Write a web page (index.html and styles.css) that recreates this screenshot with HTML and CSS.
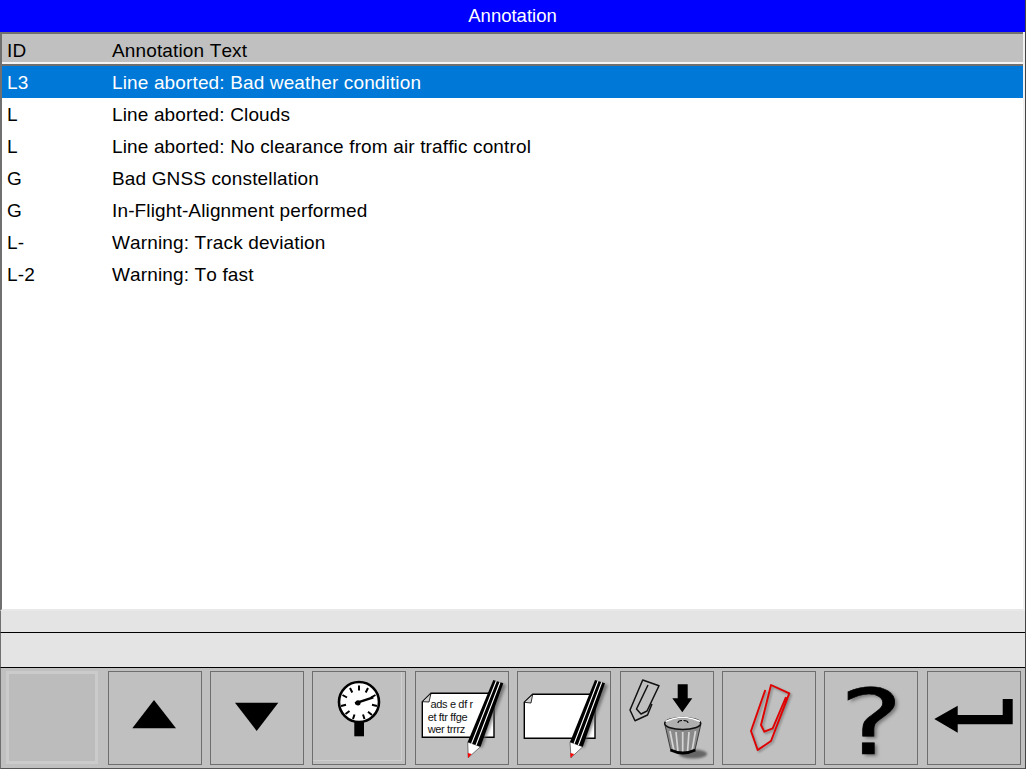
FILE: index.html
```html
<!DOCTYPE html>
<html lang="en">
<head>
<meta charset="utf-8">
<title>Annotation</title>
<link rel="stylesheet" href="styles.css">
</head>
<body>
<div class="app">
  <header class="title">Annotation</header>
  <section class="table">
    <div class="row head"><span class="id">ID</span><span>Annotation Text</span></div>
    <div class="body">
      <div class="row selected"><span class="id">L3</span><span>Line aborted: Bad weather condition</span></div>
      <div class="row"><span class="id">L</span><span>Line aborted: Clouds</span></div>
      <div class="row"><span class="id">L</span><span>Line aborted: No clearance from air traffic control</span></div>
      <div class="row"><span class="id">G</span><span>Bad GNSS constellation</span></div>
      <div class="row"><span class="id">G</span><span>In-Flight-Alignment performed</span></div>
      <div class="row"><span class="id">L-</span><span>Warning: Track deviation</span></div>
      <div class="row"><span class="id">L-2</span><span>Warning: To fast</span></div>
    </div>
  </section>
  <div class="status small"></div>
  <div class="status large"></div>
  <footer class="toolbar">
    <div class="btn disabled"></div>
    <div class="btn gap3">
      <svg viewBox="0 0 94 94"><path d="M46 29 L68 57.300 L24.300 57.300 Z" fill="#000"/></svg>
    </div>
    <div class="btn gap1">
      <svg viewBox="0 0 94 94"><path d="M25 31.700 L68.300 31.700 L46.700 60 Z" fill="#000"/></svg>
    </div>
    <div class="btn gap1 gauge">
      <svg viewBox="0 0 94 94">
        <rect x="42.300" y="50" width="9.700" height="15.300" fill="#000"/>
        <circle cx="47" cy="31" r="20" fill="#fff" stroke="#000" stroke-width="2.600"/>
        <path d="M47 14.500v5M56 17l-2.300 4.500M63.500 24l-4.500 2.500M65 35l-5-1.300M60 44l-4-3.300M52.500 48l-1.500-4.500M41 48l1.500-4.500M33.500 43l4-3M29 35l5-1.300M30.500 24l4.500 2.500M38 17l2.300 4.500" stroke="#000" stroke-width="2" fill="none"/>
        <path d="M43 32.300 L61.300 26.300" stroke="#000" stroke-width="2.400" fill="none"/>
        <circle cx="46" cy="31.800" r="2.600" fill="#000"/>
      </svg>
    </div>
    <div class="btn gap2">
      <svg viewBox="0 0 94 94">
        <defs>
          <filter id="soft" x="-30%" y="-30%" width="160%" height="160%"><feGaussianBlur stdDeviation="1.800"/></filter>
          <filter id="soft2" x="-30%" y="-30%" width="160%" height="160%"><feGaussianBlur stdDeviation="1"/></filter>
        </defs>
        <path d="M16 22.300 H79 V66.300 H7.300 V30.700 Z" fill="#fff" stroke="#000" stroke-width="1.400"/>
        <path d="M7.300 30.700 L14 31 L16 22.300 Z" fill="#d0d0d0" stroke="#000" stroke-width=".8"/>
        <text x="15.500" y="37" class="note">ads e df r</text>
        <text x="12.700" y="49.500" class="note">et ftr ffge</text>
        <text x="12.700" y="61.500" class="note">wer trrrz</text>
        <path d="M67 77 L91 14 L83 12 L58 72 Z" fill="#555" opacity=".7" filter="url(#soft)"/>
        <path d="M52.700 71 L65.500 75.700 L53.300 86.700 Z" fill="#fff" stroke="#444" stroke-width=".7"/>
        <path d="M52.800 82 L56.700 83 L53 87 Z" fill="#f00"/>
        <path d="M52.700 71 L78.300 9 L88.300 12.300 L65.500 75.700 Z" fill="#000"/>
        <path d="M56.500 72.700 L81.300 10 M61 74.200 L85 11.200" stroke="#fff" stroke-width="1.100" fill="none"/>
      </svg>
    </div>
    <div class="btn gap1">
      <svg viewBox="0 0 94 94">
        <path d="M15.700 23.300 H78 V67.300 H7.300 V31.300 Z" fill="#fff" stroke="#000" stroke-width="1.400"/>
        <path d="M7.300 31.300 L14 32 L15.700 23.300 Z" fill="#d0d0d0" stroke="#000" stroke-width=".8"/>
        <path d="M67 77 L91 14 L83 12 L58 72 Z" fill="#555" opacity=".7" filter="url(#soft)"/>
        <path d="M53 71 L65.800 75.700 L54 86.700 Z" fill="#fff" stroke="#444" stroke-width=".7"/>
        <path d="M53.300 82 L57.200 83 L53.600 87 Z" fill="#f00"/>
        <path d="M53 71 L78 9 L88 12.300 L65.800 75.700 Z" fill="#000"/>
        <path d="M57 72.700 L81 10 M61.300 74.200 L84.700 11.200" stroke="#fff" stroke-width="1.100" fill="none"/>
      </svg>
    </div>
    <div class="btn gap2">
      <svg viewBox="0 0 94 94">
        <path d="M28 14 L16.500 38 L21 43 L27 40 L39 14.700 L22.700 9 L10 39 L15 49.700 L27.500 44 L32 33" fill="none" stroke="#111" stroke-width="1.500" stroke-linejoin="round"/>
        <path d="M57.700 13.300 H67.700 V27.300 H72.300 L62.300 41.300 L52.300 27.300 H57.700 Z" fill="#000"/>
        <ellipse cx="73" cy="83" rx="14" ry="4.500" fill="#666" filter="url(#soft2)"/>
        <path d="M45 54 L50.700 79 Q63 85 75 79 L80.700 54 Z" fill="#8a8a8a" stroke="#222" stroke-width=".8"/>
        <path d="M50 60 L54 80M56 61 L58 81M62.700 61 V82M69 61 L67.500 81M75.500 60 L72 80" stroke="#d5d5d5" stroke-width="1.700"/>
        <path d="M50.500 79 Q63 85 75.300 79" fill="none" stroke="#000" stroke-width="2.800"/>
        <ellipse cx="62.700" cy="52.500" rx="18" ry="6" fill="#b0b0b0" stroke="#111" stroke-width="1.600"/>
        <path d="M45.500 50.500 Q62.700 42.500 80 50.500" fill="none" stroke="#fff" stroke-width="1.500"/>
        <path d="M58 52 Q58 49.500 62 49.500 M63.500 49.500 Q68 49.500 68 52" fill="none" stroke="#000" stroke-width="1.100"/>
      </svg>
    </div>
    <div class="btn gap1">
      <svg viewBox="0 0 94 94">
        <path d="M43.300 19 L29 60 L35.700 79 L49 70 L67.300 22.300 L49 14 L39 54 L42.300 60.700 L50.700 57.300 L64 26" fill="none" stroke="#555" stroke-width="2" stroke-linejoin="round" transform="translate(1.500,1.500)" opacity=".55" filter="url(#soft2)"/>
        <path d="M43.300 19 L29 60 L35.700 79 L49 70 L67.300 22.300 L49 14 L39 54 L42.300 60.700 L50.700 57.300 L64 26" fill="none" stroke="#e00000" stroke-width="1.900" stroke-linejoin="round"/>
      </svg>
    </div>
    <div class="btn gap1">
      <span class="help">?</span>
    </div>
    <div class="btn gap2">
      <svg viewBox="0 0 94 94"><path d="M7.300 48 L30.700 34.700 V44 H75.700 V28 H85.700 V53.300 H30.700 V61.700 Z" fill="#000"/></svg>
    </div>
  </footer>
</div>
</body>
</html>
```
FILE: styles.css
```css
* { box-sizing: border-box; }
html, body { margin: 0; padding: 0; }
body { background: #fff; font-family: "Liberation Sans", Arial, sans-serif; font-kerning: none; }
.app { width: 1026px; height: 769px; display: flex; flex-direction: column; overflow: hidden; border-right: 1px solid #444; }
.title { height: 32px; flex: none; background: #0000ff; color: #fff; font-size: 18.500px; line-height: 32px; text-align: center; }
.table { height: 579px; flex: none; display: flex; flex-direction: column; border-left: 2px solid #707070; border-right: 2px solid #f0f0f0; border-bottom: 2px solid #e8e8e8; }
.row { display: flex; height: 32px; padding-top: 2px; padding-left: 5px; font-size: 19px; letter-spacing: .14px; line-height: 30px; color: #000; white-space: nowrap; flex: none; }
.id { width: 105px; flex: none; }
.head { height: 32px; background: #c0c0c0; border-top: 2px solid #707070; border-bottom: 2px solid #f4f4f4; padding-top: 5px; line-height: 23px; }
.body { flex: 1; display: flex; flex-direction: column; background: #fff; border-top: 2px solid #6f6f6f; }
.selected { background: #0078d7; color: #fff; }
.status { flex: none; background: #e4e4e4; border-left: 1px solid #707070; border-bottom: 1px solid #000; }
.small { height: 22px; }
.large { height: 35px; }
.toolbar { flex: 1; display: flex; align-items: flex-start; padding: 3px 4px 0 5px; background: #c0c0c0; border-left: 1px solid #707070; border-bottom: 1px solid #555; }
.btn { width: 94px; height: 94px; flex: none; border: 1px solid #6e6e6e; display: flex; align-items: center; justify-content: center; }
.btn svg { display: block; flex: none; width: 94px; height: 94px; margin: -1px; }
.disabled { width: 92px; height: 93px; border: 3px solid #cbcbcb; background: #bcbcbc; }
.gap1 { margin-left: 8px; }
.gap2 { margin-left: 9px; }
.gap3 { margin-left: 10px; }
.gauge { box-shadow: inset -3px -3px 0 #c0c0c0, inset -4px -4px 0 #cfcfcf; }
.note { font-family: "Liberation Sans", Arial, sans-serif; font-size: 11px; letter-spacing: -.35px; fill: #111; }
.help { font-family: "DejaVu Sans", sans-serif; font-size: 88px; line-height: 78px; color: #000; -webkit-text-stroke: .6px #000; text-shadow: 2px 2px 3px #777; transform: translateY(5px) scale(1.36, 1.03); }
```
